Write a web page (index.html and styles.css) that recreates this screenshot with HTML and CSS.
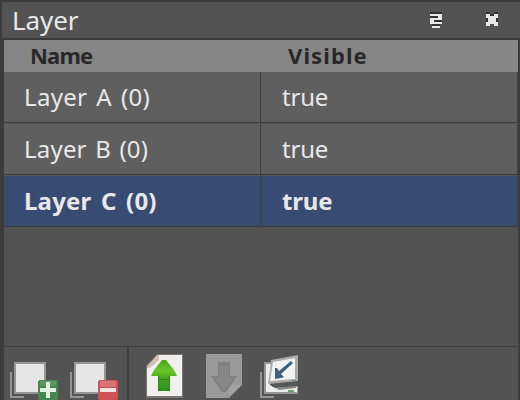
FILE: index.html
```
<!DOCTYPE html>
<html lang="en">
<head>
<meta charset="utf-8">
<title>Layer</title>
<link rel="stylesheet" href="styles.css">
</head>
<body>
<main class="panel">
  <header class="titlebar">
    <h1 class="title">Layer</h1>
    <svg class="control" width="12" height="16" viewBox="0 0 12 16"><path fill="#e8e8e8" d="M0 2h12v10H0zM2 14h8v2H2z"/><path fill="#333" d="M0 0h12v2H0zM0 4h8v2H0zM4 8h8v2H4zM2 12h8v2H2z"/></svg>
    <svg class="control" width="12" height="16" viewBox="0 0 12 16"><path fill="#333" d="M0 0h4v2H0zM8 0h4v2H8zM4 2h4v2H4zM0 6h2v4H0zM10 6h2v4h-2z"/><path fill="#e8e8e8" d="M0 2h4v2h4V2h4v4h-2v4h2v4H8v-2H4v2H0v-4h2V6H0z"/></svg>
  </header>
  <section class="table">
    <div class="head"><span class="name">Name</span><span class="visible">Visible</span></div>
    <div class="row"><span class="cell">Layer A (0)</span><span class="cell value">true</span></div>
    <div class="row"><span class="cell tight">Layer B (0)</span><span class="cell value">true</span></div>
    <div class="row selected"><span class="cell">Layer C (0)</span><span class="cell value">true</span></div>
  </section>
  <footer class="toolbar">
    <div class="group edit">
      <svg width="50" height="48" viewBox="0 0 50 48"><path class="back" d="M0 20h2v24h12v2H0z"/><path class="frame" d="M4 10h32v32H4z"/><path class="sheet" d="M6 12h28v28H6z"/><rect x="28" y="28" width="20" height="20" rx="3" fill="#468651"/><path d="M30 29h16v5H30z" fill="#5b9863"/><path d="M36 30h4v6h6v4h-6v6h-4v-6h-6v-4h6z" fill="#e7eee6"/></svg>
      <svg width="50" height="48" viewBox="0 0 50 48"><path class="back" d="M0 20h2v24h12v2H0z"/><path class="frame" d="M4 10h32v32H4z"/><path class="sheet" d="M6 12h28v28H6z"/><rect x="28" y="28" width="20" height="20" rx="3" fill="#cd5357"/><path d="M30 29h16v6H30z" fill="#d97376"/><path d="M30 36h16v4H30z" fill="#f1e5e3"/></svg>
    </div>
    <div class="group arrange">
      <svg class="smooth" width="38" height="48" viewBox="0 0 38 48">
        <defs><linearGradient id="leaf" x1="0" y1="0" x2="0" y2="1"><stop offset="0" stop-color="#4da51f"/><stop offset=".35" stop-color="#6cc629"/><stop offset=".6" stop-color="#46a41f"/><stop offset="1" stop-color="#2c951c"/></linearGradient></defs>
        <path fill="#7b7672" d="M12 2h25v44H0V14z"/><path fill="#f1f0ed" d="M12 3h24v41H1V16l3-1 3-2 3-3 2-2z"/><path fill="#d3bdb7" d="M11 3h2v5L9 11l-4 4-4 1v-2z"/>
        <path fill="url(#leaf)" d="M16 8h4l4 5 4 5 3 6h-7v15H12V24H5l3-6 4-5z"/><path fill="#2a8718" d="M12 24h1v15h-1zM23 24h1v15h-1zM13 27h10v1H13zM13 37h3v2h-3zM20 37h3v2h-3z"/>
      </svg>
      <svg class="smooth" width="38" height="48" viewBox="0 0 38 48"><path fill="#999" d="M0 2h36v31L23 46H0z"/><path fill="#a3a3a3" d="M23 45v-9l3-3h9z"/><path fill="#7f7f7f" d="M12 10h12v14h7L20 40h-4L5 24h7z"/><path fill="#878787" d="M13 14h10v12h5l-9 12h-2L8 26h5z"/></svg>
      <svg class="smooth" width="44" height="48" viewBox="0 0 44 48"><path class="back" d="M0 20h2v24h12v2H0z"/><path class="frame" d="M4 10h8v24h26v8H4z"/><path fill="#eee" d="M6 12h6v23h25v5H6z"/><path fill="#555957" d="M9 30l28-2v4l-4 3-18 1-5-3z"/><path fill="#858a87" d="M16 36l20-2v2l-17 2z"/><path fill="#aaa" d="M11 8l27-5v26L8 32l2-14z"/><path fill="#f1f1ef" d="M13 10l22-4v21l-25 2z"/><path fill="#3d617c" d="M31 9l2 2-12 11 3 3-3 1-6 1V16h2l2 3z"/><path fill="#719c77" d="M31 28h5v1h-5zM28 38h6v2h-6z"/></svg>
    </div>
  </footer>
</main>
</body>
</html>
```
FILE: styles.css
```
* { box-sizing: border-box; }
body { margin: 0; background: #3c3c3c; }
.panel {
  width: 520px; height: 400px; padding: 2px 0 0 2px;
  display: flex; flex-direction: column; overflow: hidden;
  font-family: "Noto Sans", "Open Sans", sans-serif; color: #e8e8e8;
}
.titlebar {
  display: flex; align-items: center; flex: none; height: 36px;
  width: 518px; padding: 0 22px 0 10px; gap: 44px; background: #535353;
}
.title { flex: 1; margin: 0; font-size: 26px; font-weight: 400; line-height: 36px; letter-spacing: -0.1px; }
.control { display: block; shape-rendering: crispEdges; }
.table {
  flex: none; margin: 2px 0 0 2px; width: 514px; height: 306px;
  background: #525252;
}
.head {
  height: 32px; display: grid; grid-template-columns: 258px 1fr; width: 514px;
  background: #868686; color: #282828; font-size: 22px; line-height: 31px; font-weight: 700;
}
.head .name { padding-left: 26px; letter-spacing: -0.8px; }
.head .visible { padding-left: 26px; letter-spacing: 1.1px; }
.row { height: 52px; display: grid; grid-template-columns: 257px 257px; background: #565656; }
.cell {
  height: 51px; background: #5f5f5f; border-right: 1px solid #404040;
  border-bottom: 1px solid #3c3c3c; padding-left: 20px;
  font-size: 24px; line-height: 49px; white-space: nowrap;
  letter-spacing: 0.3px; word-spacing: 2.5px;
}
.cell.tight { letter-spacing: 0.2px; word-spacing: 2px; }
.cell.value { padding-left: 21px; letter-spacing: -0.2px; }
.selected { height: 51px; font-weight: 700; }
.selected .cell { background: #384c73; letter-spacing: 0.2px; word-spacing: 3px; }
.selected .cell.value { letter-spacing: -0.2px; }
.toolbar {
  flex: none; margin-left: 2px; width: 514px; height: 54px;
  border-top: 1px solid #3c3c3c; background: #535353; display: flex;
}
.group { display: flex; padding-top: 5px; }
.edit { width: 125px; padding-left: 6px; gap: 10px; border-right: 2px solid #3e3e3e; }
.arrange { padding-left: 17px; gap: 22px; }
.arrange svg:last-child { margin-left: -6px; }
.toolbar svg { display: block; shape-rendering: crispEdges; }
.toolbar .smooth { shape-rendering: auto; }
.back, .frame { fill: #969696; }
.sheet { fill: #e6e6e6; }
```
